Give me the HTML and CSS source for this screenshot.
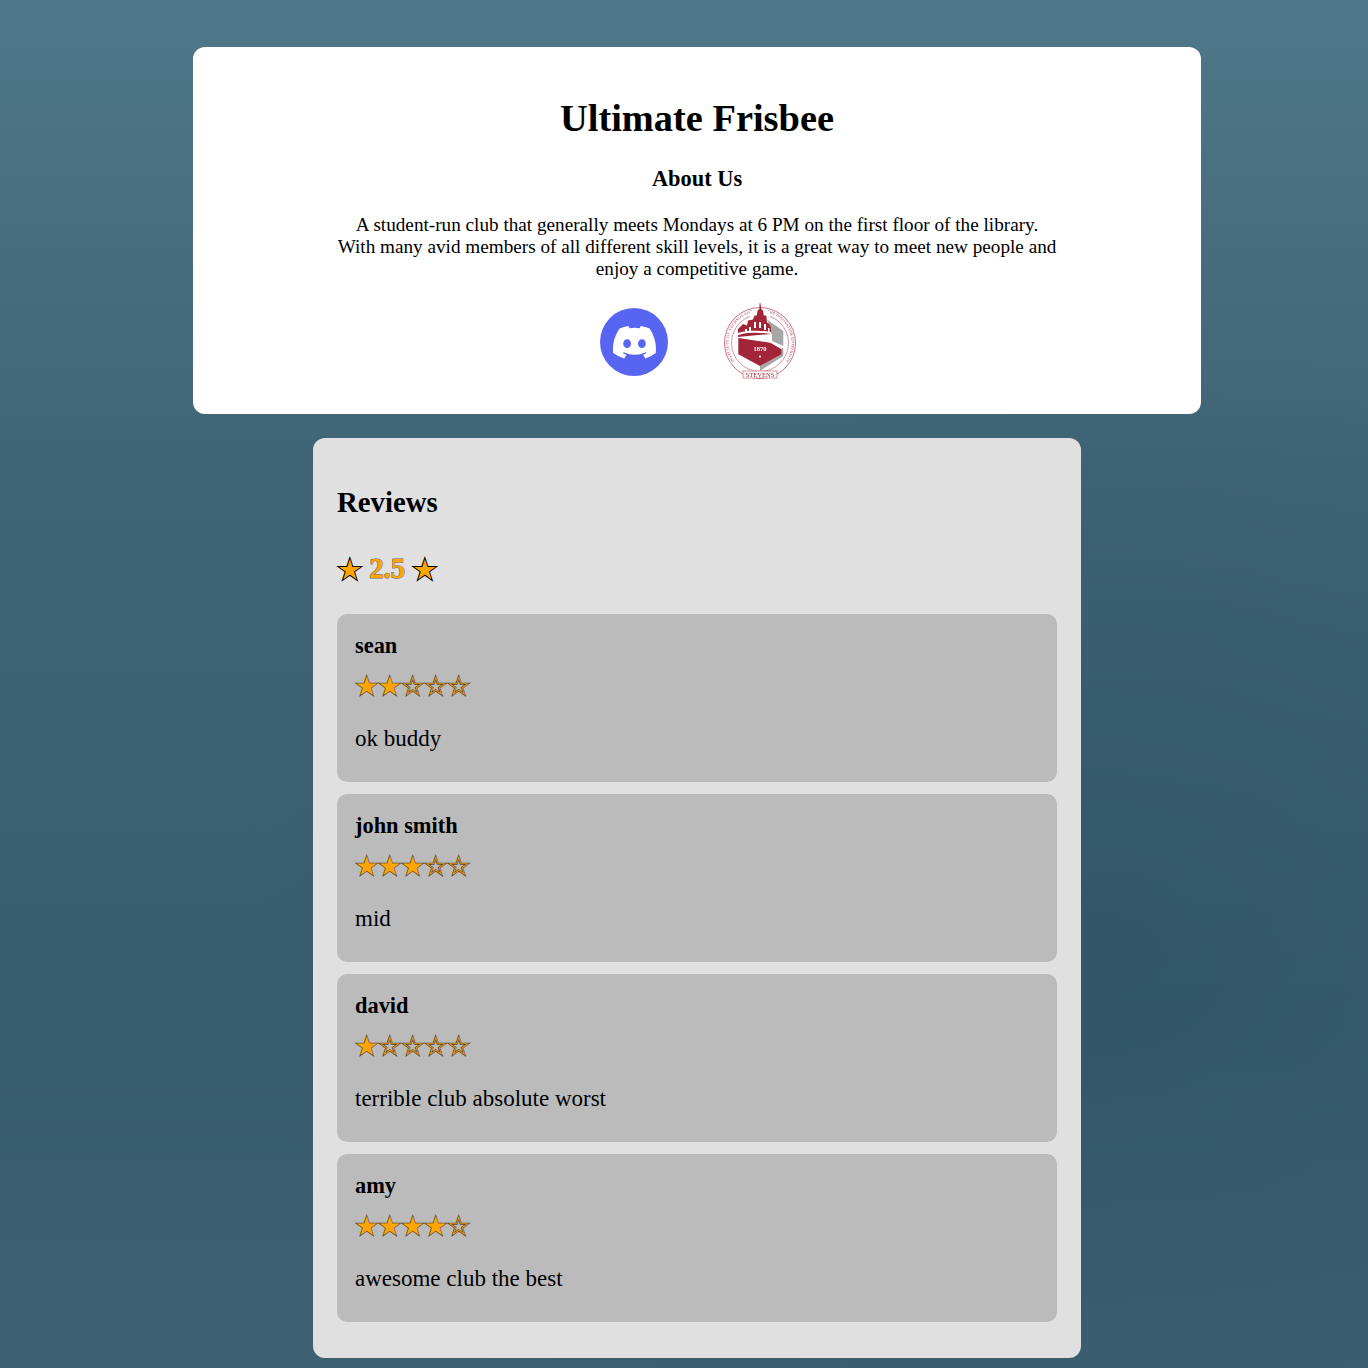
FILE: index.html
```html
<!DOCTYPE html>
<html lang="en">
<head>
  <meta charset="UTF-8" />
  <meta name="viewport" content="width=device-width, initial-scale=1.0"/>
  <title>Ultimate Frisbee</title>
  <link rel="stylesheet" href="styles.css">
</head>
<body>

  <!-- Club info -->
  <section class="club-card">
    <h1>Ultimate Frisbee</h1>
    <h2>About Us</h2>
    <p class="club-desc">A student-run club that generally meets Mondays at 6 PM on the first floor of the library. With many avid members of all different skill levels, it is a great way to meet new people and enjoy a competitive game.</p>
    <div class="club-links">
      <a href="#" class="club-link" aria-label="Discord">
        <svg width="68" height="68" viewBox="0 0 68 68">
          <circle cx="34" cy="34" r="34" fill="#5865f2"/>
          <path fill="#fff" d="M49.6 20.6A36 36 0 0 0 40.7 17.900c-.4.7-.8 1.600-1.100 2.300a33.400 33.400 0 0 0-10 0c-.3-.7-.7-1.600-1.100-2.300a36 36 0 0 0-8.900 2.700C14 28.900 12.500 37 13.200 45a36.200 36.200 0 0 0 10.900 5.500c.9-1.200 1.700-2.400 2.300-3.800-1.300-.5-2.500-1.100-3.600-1.800.3-.2.600-.4.9-.7a26 26 0 0 0 22.100 0c.3.300.6.500.9.700-1.200.7-2.400 1.300-3.600 1.800.7 1.300 1.500 2.600 2.300 3.800A36 36 0 0 0 55.800 45c.9-9.300-1.500-17.300-6.200-24.400zM27.100 40.100c-2.100 0-3.900-2-3.900-4.400s1.700-4.400 3.900-4.400 3.900 2 3.900 4.400-1.700 4.400-3.900 4.400zm14.800 0c-2.100 0-3.900-2-3.900-4.400s1.700-4.400 3.900-4.400 3.900 2 3.900 4.400-1.800 4.400-3.900 4.400z"/>
        </svg>
      </a>
      <a href="#" class="club-link seal" aria-label="Stevens">
        <svg width="72" height="78" viewBox="0 0 72 78">
          <defs>
            <path id="seal-arc-left" d="M10.500 58.500A31.500 31.500 0 0 1 29 9.300"/>
            <path id="seal-arc-right" d="M43 9.300A31.500 31.500 0 0 1 61.500 58.500"/>
          </defs>
          <circle cx="36" cy="40" r="35.500" fill="none" stroke="#b5505f" stroke-width=".8"/>
          <circle cx="36" cy="40" r="28.500" fill="none" stroke="#b5505f" stroke-width=".6"/>
          <text class="seal-ring-text"><textPath href="#seal-arc-left" textLength="62">INSTITUTE OF TECHNOLOGY</textPath></text>
          <text class="seal-ring-text"><textPath href="#seal-arc-right" textLength="62">THE INNOVATION UNIVERSITY</textPath></text>
          <!-- tower and building -->
          <rect x="26" y="8" width="20" height="8" fill="#fff"/>
          <path fill="#a32638" d="M35.600 0h.8l.8 6 1.800 1.500.8 5h2.500l.7 7 4.500 2v9.500L34 32l-20 2v-8l5-5 4 1.500 1-5 5-1 1.500-4h2.300l.8-5 1.800-1.500z"/>
          <path fill="#fff" d="M21 26h2v4h-2zM25 24h2v5h-2zM30 19h2v6h-2zM35 19h2v6h-2zM40 21h2v6h-2zM44 25h1.500v4H44z"/>
          <!-- grey fold -->
          <path fill="#a7a7a7" d="M42.700 16.300L59.300 28v15L48 38V26.300zM59.300 45v8L36 68v-5l21.700-11.700V45z"/>
          <!-- shield -->
          <path fill="#a32638" d="M14.300 35l32 4.700L57.700 46.300v5L36 63 14.300 51.300z"/>
          <path fill="none" stroke="#fff" stroke-width="2" d="M12 32C20 28 36 28 47 30"/>
          <text x="36" y="48" class="seal-year">1870</text>
          <path fill="#fff" d="M36 52l1 1.500-1 1.500-1-1.500z"/>
          <rect x="19" y="68" width="34" height="7" fill="#fff" stroke="#b5505f" stroke-width=".6"/>
          <text x="36" y="74" class="seal-name">STEVENS</text>
        </svg>
      </a>
    </div>
  </section>

  <!-- Reviews -->
  <section class="reviews-card">
    <h2 class="reviews-title">Reviews</h2>
    <div class="avg-rating"><span class="avg-star">★</span> 2.5 <span class="avg-star">★</span></div>

    <div class="review">
      <div class="review-name">sean</div>
      <div class="review-stars">★★☆☆☆</div>
      <p class="review-text">ok buddy</p>
    </div>
    <div class="review">
      <div class="review-name">john smith</div>
      <div class="review-stars">★★★☆☆</div>
      <p class="review-text">mid</p>
    </div>
    <div class="review">
      <div class="review-name">david</div>
      <div class="review-stars">★☆☆☆☆</div>
      <p class="review-text">terrible club absolute worst</p>
    </div>
    <div class="review">
      <div class="review-name">amy</div>
      <div class="review-stars">★★★★☆</div>
      <p class="review-text">awesome club the best</p>
    </div>
  </section>

</body>
</html>
```

FILE: styles.css
```css
html {
  height: 100%;
}

body {
  font-family: 'Liberation Serif', serif;
  background:
    radial-gradient(ellipse 850px 620px at 1100px 960px, rgba(44, 80, 98, 0.5), rgba(44, 80, 98, 0)),
    linear-gradient(#4e7889 0%, #3f6475 35%, #385d6e 75%, #3d6172 100%);
  margin: 0;
  padding: 47px 0 10px 26px;
  color: #000;
}

.club-card {
  background-color: #fff;
  width: 1008px;
  box-sizing: border-box;
  margin: 0 auto 24px;
  padding: 24px;
  border-radius: 12px;
  text-align: center;
  height: 367px;
}

.club-card h1 {
  font-size: 38.4px;
  margin: 25px 0 26px;
}

.club-card h2 {
  font-size: 22.4px;
  margin: 0 0 22px;
}

.club-desc {
  font-size: 19.2px;
  width: 720px;
  margin: 0 auto 23px;
}

.club-links {
  display: flex;
  justify-content: center;
  align-items: center;
  gap: 56px;
  padding-left: 2px;
}

.club-link {
  display: block;
  line-height: 0;
}

.club-link svg {
  overflow: visible;
}

.seal {
  filter: blur(0.3px);
}

.seal-ring-text {
  font-size: 3.800px;
  fill: #a32638;
}

.seal-year {
  font-size: 6.500px;
  font-weight: bold;
  fill: #fff;
  text-anchor: middle;
}

.seal-name {
  font-size: 6.500px;
  fill: #a32638;
  text-anchor: middle;
}

.reviews-card {
  background-color: #e0e0e0;
  width: 768px;
  box-sizing: border-box;
  margin: 0 auto;
  padding: 24px;
  border-radius: 12px;
  height: 920px;
}

.reviews-title {
  font-size: 28.8px;
  margin: 24px 0 33px;
}

.avg-rating {
  font-size: 28.8px;
  font-weight: bold;
  color: orange;
  -webkit-text-stroke: 1px #666;
  paint-order: stroke fill;
  margin-bottom: 29px;
}

.avg-star {
  font-size: 24px;
  margin: 0 1.500px;
  -webkit-text-stroke: 2px #000;
}

.review {
  background-color: #bbb;
  border-radius: 10px;
  padding: 18px;
  height: 168px;
  box-sizing: border-box;
  margin-bottom: 12px;
}

.review-name {
  font-size: 22.4px;
  font-weight: bold;
  margin: 1px 0 12px;
}

.review-stars {
  font-size: 26px;
  color: orange;
  -webkit-text-stroke: 1.4px #5a4a30;
  paint-order: stroke fill;
  margin-bottom: 24px;
}

.review-text {
  font-size: 23px;
  margin: 0;
}
```
